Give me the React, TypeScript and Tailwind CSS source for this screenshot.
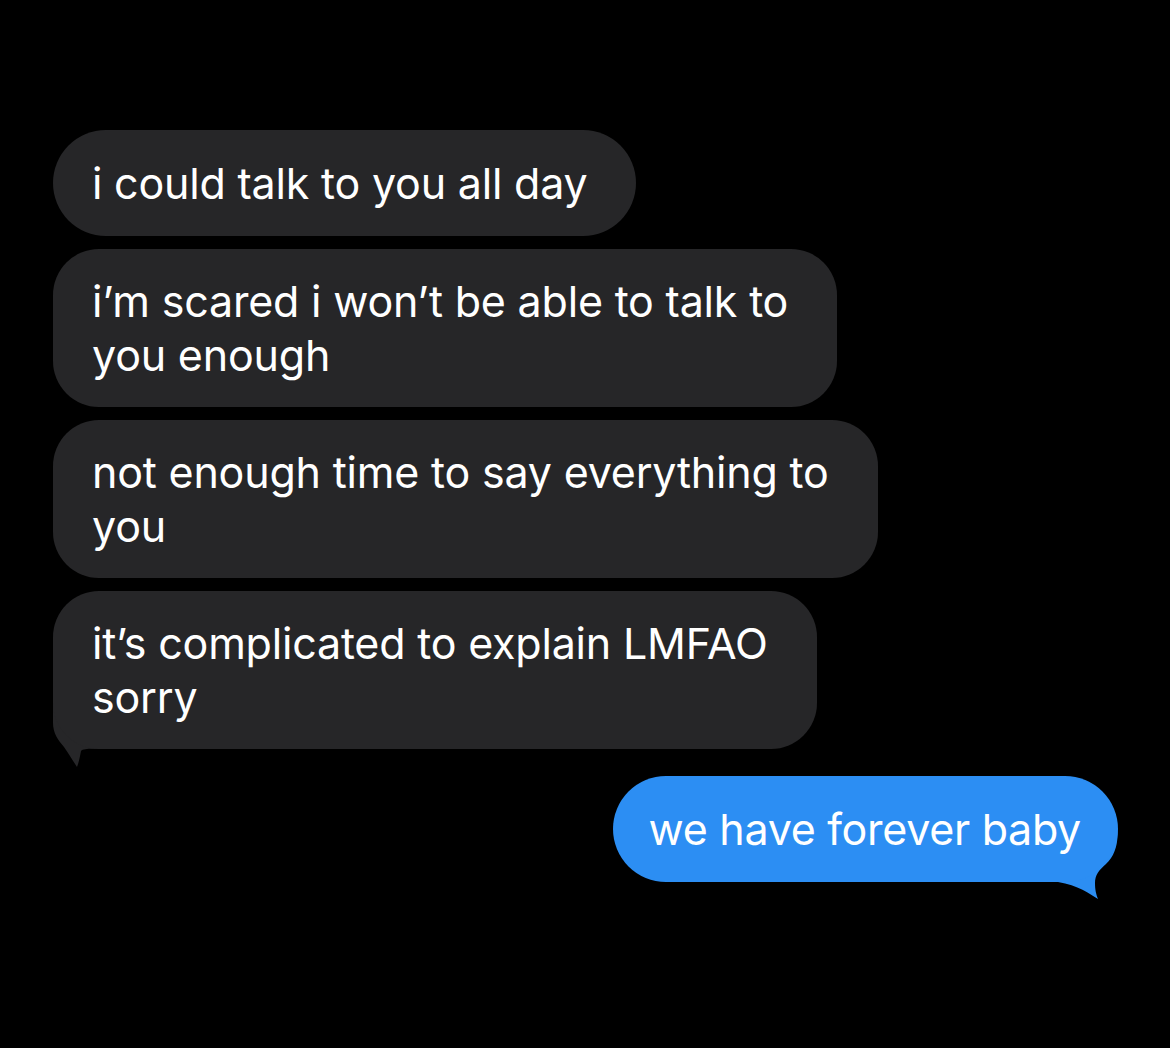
const received = [
  'i could talk to you all day',
  'i’m scared i won’t be able to talk to\nyou enough',
  'not enough time to say everything to\nyou',
  'it’s complicated to explain LMFAO\nsorry',
];

function GrayTail() {
  return (
    <svg
      className="absolute left-0 bottom-[-20px]"
      width="56"
      height="70"
      viewBox="0 -50 56 70"
    >
      <path
        d="M0,-50 L0,-26 C0,-16 5,-9 11,-2 C16,5 20,12 24,18 C26,13 27,7 28,2 C31,-1 40,0 56,0 L56,-50 Z"
        fill="#262628"
      />
    </svg>
  );
}

function BlueTail() {
  return (
    <svg
      className="absolute right-0 bottom-[-20px]"
      width="60"
      height="74"
      viewBox="-60 -54 60 74"
    >
      <path
        d="M-1,-54 C1,-40 -3,-26 -12,-18 C-19,-12 -23,-7 -23,1 C-23,8 -22,12 -20,17 C-28,12 -40,3 -60,0 L-60,-54 Z"
        fill="#2c8ef3"
      />
    </svg>
  );
}

export default function App() {
  return (
    <div
      className="min-h-[1048px] bg-black text-white pt-[130px] px-[53px] flex flex-col"
      style={{ fontFamily: 'Inter, "Noto Sans", sans-serif' }}
    >
      <div className="flex flex-col gap-[13px]">
        {received.map((msg, idx) => {
          const multi = msg.includes('\n');
          const last = idx === received.length - 1;
          return (
            <div key={idx} className="relative self-start">
              <div
                className={`relative z-10 bg-[#262628] whitespace-pre-line text-[43px] leading-[54px] tracking-[-0.2px] pl-[39px] pr-[49px] ${
                  multi ? 'py-[25px] rounded-[46px]' : 'py-[26px] rounded-[53px]'
                }`}
              >
                {msg}
              </div>
              {last && <GrayTail />}
            </div>
          );
        })}
      </div>

      <div className="relative self-end mt-[27px] mr-[-1px]">
        <div className="relative z-10 bg-[#2c8ef3] text-[43px] leading-[54px] tracking-[-0.3px] pl-[36px] pr-[37px] py-[26px] rounded-[53px]">
          we have forever baby
        </div>
        <BlueTail />
      </div>
    </div>
  );
}
